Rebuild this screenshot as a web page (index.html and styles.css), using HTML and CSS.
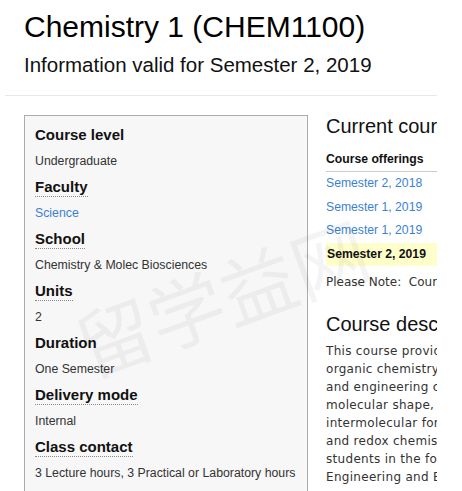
FILE: index.html
```html
<!DOCTYPE html>
<html>
<head>
<meta charset="utf-8">
<title>Chemistry 1 (CHEM1100)</title>
<link rel="stylesheet" href="styles.css">
</head>
<body>
<div class="page">
  <header class="header">
    <h1 class="title">Chemistry 1 (CHEM1100)</h1>
    <p class="subtitle">Information valid for Semester 2, 2019</p>
  </header>
  <hr class="rule">
  <div class="main">
    <aside class="summary">
      <dl class="facts">
        <dt class="fact-label">Course level</dt>
        <dd class="fact-value">Undergraduate</dd>
        <dt class="fact-label"><abbr class="tip">Faculty</abbr></dt>
        <dd class="fact-value"><a class="link" href="#">Science</a></dd>
        <dt class="fact-label"><abbr class="tip">School</abbr></dt>
        <dd class="fact-value">Chemistry &amp; Molec Biosciences</dd>
        <dt class="fact-label"><abbr class="tip">Units</abbr></dt>
        <dd class="fact-value">2</dd>
        <dt class="fact-label">Duration</dt>
        <dd class="fact-value">One Semester</dd>
        <dt class="fact-label"><abbr class="tip">Delivery mode</abbr></dt>
        <dd class="fact-value">Internal</dd>
        <dt class="fact-label"><abbr class="tip">Class contact</abbr></dt>
        <dd class="fact-value">3 Lecture hours, 3 Practical or Laboratory hours</dd>
      </dl>
    </aside>
    <section class="content">
      <h2 class="section-title">Current course offerings</h2>
      <div class="offerings">
        <div class="offer-head">Course offerings</div>
        <div class="offer-row"><a class="link" href="#">Semester 2, 2018</a></div>
        <div class="offer-row"><a class="link" href="#">Semester 1, 2019</a></div>
        <div class="offer-row"><a class="link" href="#">Semester 1, 2019</a></div>
        <div class="offer-row current">Semester 2, 2019</div>
      </div>
      <p class="note">Please Note:&nbsp; Course offerings may change without notice.</p>
      <h2 class="section-title desc-title">Course description</h2>
      <p class="desc">This course provides an introduction to the fundamental principles of<br>organic chemistry for students intending to major in the physical, life<br>and engineering courses. Topics include atomic structure, bonding,<br>molecular shape, and states of matter, thermochemistry, kinetics,<br>intermolecular forces, equilibrium, acids and bases, solubility<br>and redox chemistry. It is designed to provide a foundation for<br>students in the following programs: Science, Medical Science,<br>Engineering and Biotechnology.</p>
    </section>
  </div>
</div>
<div class="watermark" aria-hidden="true">留学益网</div>
</body>
</html>
```
FILE: styles.css
```css
html, body {
  margin: 0;
  padding: 0;
  background: #ffffff;
}

body {
  position: relative;
  font-family: "Liberation Sans", Arial, sans-serif;
  color: #111;
  overflow: hidden;
  height: 491px;
}

.page {
  margin-left: 5px;
  width: 432px;
  overflow: hidden;
}

.header {
  padding: 0 19px;
}

.title {
  margin: 10px 0 0;
  font-size: 30px;
  line-height: 34px;
  font-weight: normal;
  color: #000;
  white-space: nowrap;
}

.subtitle {
  margin: 9px 0 0;
  font-size: 20.5px;
  line-height: 24px;
  color: #111;
  white-space: nowrap;
}

.rule {
  margin: 18px 0 0;
  border: 0;
  border-top: 1px solid #e8e8e8;
  height: 0;
}

.main {
  display: flex;
  align-items: flex-start;
  gap: 18px;
  padding-left: 19px;
  margin-top: 19px;
}

.summary {
  flex: 0 0 284px;
  box-sizing: border-box;
  background: #f7f7f7;
  border: 1px solid #acacac;
  border-bottom: 0;
  padding: 6px 10px 30px;
}

.facts {
  margin: 0;
}

.fact-label {
  font-size: 15px;
  line-height: 26px;
  font-weight: bold;
  color: #111;
}

.tip {
  text-decoration: none;
  border-bottom: 1px dotted #8a8a8a;
  padding-bottom: 1px;
}

.fact-value {
  margin: 0;
  padding-top: 1px;
  font-size: 12.3px;
  line-height: 25px;
  color: #333;
  white-space: nowrap;
}

.link {
  color: #3b7fd6;
  text-decoration: none;
}

.content {
  flex: 0 0 360px;
}

.section-title {
  margin: 0;
  font-size: 20px;
  line-height: 22px;
  font-weight: normal;
  color: #111;
  white-space: nowrap;
}

.offerings {
  margin-top: 15px;
  font-size: 12.2px;
}

.offer-head {
  font-weight: bold;
  line-height: 14px;
  padding-bottom: 5px;
  border-bottom: 1px solid #cccccc;
  color: #111;
}

.offer-row {
  height: 23.5px;
  line-height: 23.5px;
}

.offer-row.current {
  background: #fefecb;
  font-weight: bold;
  color: #111;
  padding-left: 1px;
}

.note {
  margin: 7px 0 0;
  font-family: "DejaVu Sans", Verdana, sans-serif;
  font-size: 12px;
  line-height: 18px;
  color: #333;
  white-space: nowrap;
}

.desc-title {
  margin-top: 22px;
}

.desc {
  margin: 7px 0 0;
  font-family: "DejaVu Sans", Verdana, sans-serif;
  font-size: 12px;
  line-height: 18px;
  letter-spacing: 0.3px;
  color: #333;
  white-space: nowrap;
}

.watermark {
  position: absolute;
  left: 69px;
  top: 257px;
  width: 304px;
  font-family: "Noto Sans CJK SC", sans-serif;
  font-size: 76px;
  line-height: 76px;
  color: rgba(0, 0, 0, 0.045);
  transform: rotate(-20deg);
  white-space: nowrap;
  pointer-events: none;
}
```
